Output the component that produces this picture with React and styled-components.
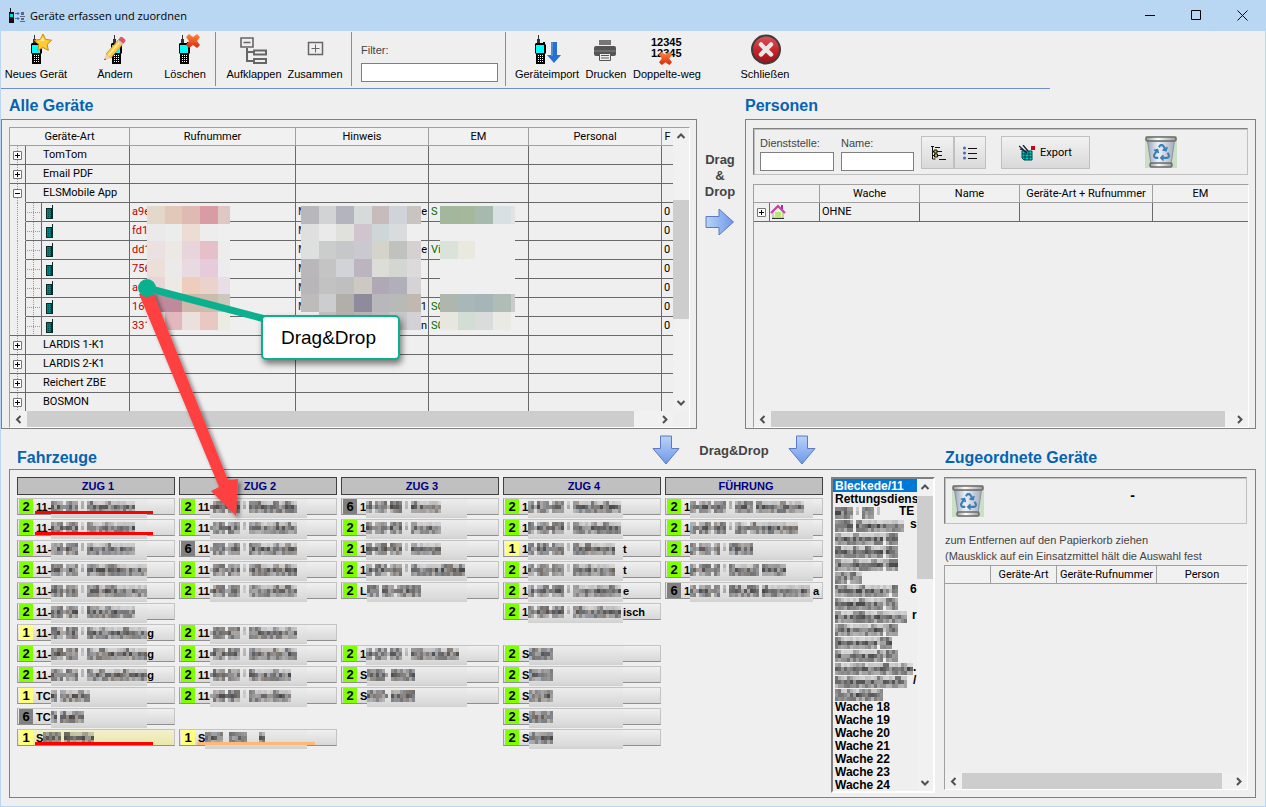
import React, { useState } from 'react'
import styled, { createGlobalStyle, css } from 'styled-components'
import { FaRecycle } from 'react-icons/fa'

const GlobalStyle = createGlobalStyle`
  * {
    box-sizing: border-box;
  }

  body {
    margin: 0;
    background: #efefef;
    color: #000;
    font-family: "Liberation Sans", Arial, sans-serif;
    font-size: 11px;
  }

  button, input, select {
    font: inherit;
    color: inherit;
    border-radius: 0;
    margin: 0;
    padding: 0;
  }
`

/* ---------- window ---------- */

const Window = styled.div`
  position: relative;
  display: flex;
  flex-direction: column;
  min-height: 100vh;
  min-width: 1100px;
  border: 1px solid #b9d7f3;
  border-top: 0;
  background: #efefef;
`

const TitleBar = styled.header`
  display: flex;
  align-items: center;
  height: 31px;
  padding-left: 8px;
  background: #b9d7f3;
`

const WindowTitle = styled.h1`
  flex: 1;
  margin: 0 0 0 5px;
  font: 400 11px/30px "Open Sans", sans-serif;
`

const WindowButton = styled.button`
  width: 46px;
  height: 31px;
  border: 0;
  background: none;

  svg {
    display: block;
    margin: 0 auto;
  }
`

/* ---------- toolbar ---------- */

const Toolbar = styled.nav`
  display: flex;
  width: 1049px;
  height: 58px;
  padding: 1px 0 2px;
  border-bottom: 1px solid #6d8fd0;
`

const ToolGroup = styled.div`
  display: flex;
  padding: 0 ${p => p.$right || 0}px 0 ${p => p.$left || 0}px;
  border-right: ${p => (p.$last ? '0' : '1px solid #6d8fd0')};
`

const ToolButton = styled.button`
  display: flex;
  flex-direction: column;
  align-items: center;
  width: ${p => p.$width}px;
  margin-left: ${p => p.$gap || 0}px;
  border: 0;
  background: none;
  white-space: nowrap;
  line-height: 14px;

  svg {
    display: block;
    margin: 1px 0 2px;
  }
`

const Field = styled.label`
  display: flex;
  flex-direction: column;
  width: ${p => p.$width}px;
  color: #444;
  line-height: 14px;
`

const Spacer = styled.span`
  height: 11px;
`

const TextInput = styled.input`
  width: 100%;
  height: 19px;
  margin-top: ${p => p.$gap || 0}px;
  padding: 0 3px;
  border: 1px solid #7f7f7f;
  background: #fff;
`

/* ---------- panels ---------- */

const TopArea = styled.main`
  display: grid;
  grid-template-columns: minmax(0, 696fr) 48px minmax(0, 511fr);
  padding-right: 9px;
`

const Column = styled.section`
  display: flex;
  flex-direction: column;
`

const SectionTitle = styled.h2`
  margin: 0;
  padding: 4px 0 0 ${p => p.$indent || 0}px;
  font-size: 16px;
  line-height: 26px;
  color: #0563b3;
`

const Panel = styled.div`
  display: flex;
  flex-direction: column;
  flex: 1;
  padding: ${p => p.$pad || '7px 6px 0 7px'};
  border: 1px solid #808080;
`

const DragHint = styled.div`
  display: flex;
  flex-direction: column;
  align-items: center;
  padding: 63px 2px 0 0;
  color: #444;
  font-weight: 700;
  font-size: 13px;
  line-height: 16px;

  svg {
    margin-top: 8px;
  }
`

const GroupBox = styled.div`
  display: flex;
  align-items: flex-start;
  height: 47px;
  margin-right: 1px;
  padding: ${p => p.$pad};
  border: 1px solid #c0c0c0;
  border-top-color: #808080;
  border-left-color: #808080;
  box-shadow: inset 1px 1px 0 #c0c0c0;
`

/* ---------- grids ---------- */

const Frame = styled.div`
  position: relative;
  display: grid;
  grid-template-columns: minmax(0, 1fr) ${p => (p.$vertical ? '16px' : '')};
  grid-template-rows: minmax(0, 1fr) 16px;
  flex: 1;
  margin-top: ${p => p.$top || 0}px;
  border: 1px solid #fff;
  border-top-color: #a0a0a0;
  border-left-color: #a0a0a0;
`

const Viewport = styled.div`
  overflow: hidden;
`

const Table = styled.table`
  width: 100%;
  table-layout: fixed;
  border-spacing: 0;
  font: 11px/16px Roboto, sans-serif;

  th {
    height: 18px;
    padding: 0;
    border-right: 1px solid #a0a0a0;
    border-bottom: 1px solid #a0a0a0;
    font-weight: 400;
    white-space: nowrap;
    overflow: hidden;
    background: #f1f1f1;
  }

  td {
    height: 19px;
    padding: 0 0 0 2px;
    border-right: 1px solid #696969;
    border-bottom: 1px solid #696969;
    white-space: nowrap;
    overflow: hidden;
  }

  th:last-child,
  td:last-child {
    border-right: 0;
  }
`

const DeviceTable = styled(Table)`
  tr:last-child td {
    height: 18px;
    border-bottom: 0;
  }
`

const TreeCell = styled.td`
  && {
    padding: 0;
    border-bottom-color: ${p => (p.$open ? 'transparent' : '#696969')};
    background: linear-gradient(#999 1px, transparent 1px) 7px 0 / 1px 2px repeat-y;
  }
`

const GroupCell = styled.td`
  && {
    padding-left: 17px;
  }
`

const BareCell = styled.td`
  && {
    padding: 0;
  }
`

const Branch = styled.div`
  display: flex;
  align-items: center;
  height: 18px;

  i {
    align-self: stretch;
    width: 16px;
    margin-right: 4px;
    border-right: 1px solid #696969;
    background:
      linear-gradient(#999 1px, transparent 1px) 7px 0 / 1px 2px repeat-y,
      linear-gradient(90deg, #999 1px, transparent 1px) 7px 9px / 2px 1px repeat-x;
  }
`

const Expander = styled.button`
  display: block;
  width: 9px;
  height: 9px;
  margin: 0 auto 0 3px;
  border: 0;
  background: #fff;

  svg {
    display: block;
  }
`

const Split = styled.div`
  display: flex;
  justify-content: space-between;
  color: #0a246a;

  span:last-child {
    padding-right: 1px;
    color: #000;
  }
`

const Ink = styled.span`
  color: ${p => p.$color};
`

const Censor = styled.svg`
  position: absolute;
  top: 78px;
  left: ${p => p.$left}px;
`

/* ---------- scrollbars ---------- */

const Bar = styled.div`
  display: flex;
  flex-direction: ${p => (p.$vertical ? 'column' : 'row')};
  background: #f1f1f1;
`

const ScrollArrow = styled.button`
  flex: 0 0 17px;
  display: grid;
  place-items: center;
  border: 0;
  background: none;
`

const Gap = styled.span`
  flex: ${p => p.$grow} 0 0;
`

const Thumb = styled.span`
  flex: ${p => p.$grow} 0 0;
  background: #cdcdcd;
`

/* ---------- vehicles ---------- */

const MiddleBar = styled.div`
  display: grid;
  grid-template-columns: minmax(0, 1fr) 164px 129px 311px;
  height: 40px;
  padding: 0 9px 0 16px;

  h2 {
    padding-top: 16px;
  }
`

const MiddleHint = styled.div`
  grid-column: 2;
  display: flex;
  justify-content: space-between;
  align-items: center;
  color: #444;
  font-weight: 700;
  font-size: 13px;
`

const HeadSlot = styled.div`
  grid-column: 4;
`

const LowerPanel = styled(Panel)`
  flex-direction: row;
  margin: 0 9px 8px 8px;
  padding: 7px 7px 4px;
`

const VehicleGrid = styled.div`
  flex: 1;
  display: grid;
  grid-template-columns: repeat(5, minmax(0, 1fr));
  align-items: start;
  gap: 4px;
`

const VehicleList = styled.div`
  display: grid;
  grid-auto-rows: 17px;
  gap: 4px;
`

const ColumnHead = styled.h3`
  margin: 0 0 3px;
  padding-left: 4px;
  border: 1px solid #404040;
  background: #c0c0c0;
  color: #000080;
  font-size: 11px;
  line-height: 16px;
  text-align: center;
`

const VehicleButton = styled.button`
  position: relative;
  display: flex;
  width: 100%;
  border: 1px solid #c3c3c3;
  border-left-color: #a0a0a0;
  border-bottom-color: #8f8f8f;
  background: ${p => (p.$marked ? 'linear-gradient(#f3f0cd, #ebe7a8)' : 'linear-gradient(#f0f0f0, #d8d8d8)')};
  font-weight: 700;
  line-height: 16px;
  text-align: left;

  ${p => p.$line && css`
    &::after {
      content: '';
      position: absolute;
      left: 17px;
      bottom: 0;
      width: 118px;
      height: 3px;
      background: ${p.$line};
    }
  `}
`

const Status = styled.span`
  flex: 0 0 14px;
  height: 15px;
  margin: 0 3px 0 1px;
  background: ${p => ({ 1: '#ffff80', 2: '#80ff00', 6: '#808080' })[p.$code]};
  font-size: 13px;
  line-height: 15px;
  text-align: center;
`

const CallSign = styled.span`
  flex: 0 0 ${p => p.$width}px;
  display: flex;
`

const MosaicBox = styled.span`
  flex: 1;
  min-width: 0;
  height: 19px;
  padding-top: 2px;
  overflow: hidden;
  background: ${p => (p.$clear ? 'none' : 'linear-gradient(#ececec, #dadada 80%, #d0d0d0)')};

  svg {
    display: block;
  }
`

/* ---------- stations ---------- */

const StationBox = styled.div`
  position: relative;
  display: grid;
  grid-template-columns: minmax(0, 1fr) 16px;
  width: 104px;
  margin: 0 9px 0 8px;
  border: 2px solid #fff;
  border-top-color: #808080;
  border-left-color: #808080;
`

const StationSelect = styled.select`
  width: 100%;
  height: 312px;
  border: 0;
  outline: 0;
  background: #efefef;
  overflow: hidden;

  option {
    height: 13px;
    min-height: 0;
    padding: 0 0 0 2px;
    font: 700 12px/13px "Liberation Sans", Arial, sans-serif;
    white-space: nowrap;
  }

  option:checked {
    background: #0078d7 linear-gradient(#0078d7, #0078d7);
    color: #fff;
  }
`

const StationCover = styled.div`
  position: absolute;
  top: 26px;
  left: 2px;
  width: 82px;
  pointer-events: none;
  font-weight: 700;
  font-size: 12px;
  line-height: 13px;
`

const StationRow = styled.div`
  display: flex;
  height: 13px;
`

/* ---------- assigned devices ---------- */

const Assigned = styled.section`
  display: flex;
  flex-direction: column;
  width: 304px;
  padding-bottom: 3px;
`

const AssignedName = styled.strong`
  flex: 1;
  padding-left: 42px;
  font-size: 14px;
  line-height: 20px;
  text-align: center;
`

const Note = styled.p`
  margin: 8px 0 1px 1px;
  color: #444;
  line-height: 16px;
`

/* ---------- persons ---------- */

const ViewSwitch = styled.div`
  display: flex;
  margin-left: 7px;
`

const FlatButton = styled.button`
  display: flex;
  align-items: center;
  justify-content: center;
  gap: 5px;
  width: ${p => p.$width}px;
  height: 33px;
  margin-left: ${p => p.$gap || 0}px;
  border: 1px solid #c0c0c0;
  background: linear-gradient(#f2f2f2, #d9d9d9);
  font: 11px/16px Roboto, sans-serif;
`

const BinSlot = styled.div`
  margin-left: 55px;
`

/* ---------- annotation ---------- */

const Annotation = styled.svg`
  position: absolute;
  top: 0;
  left: 0;
  pointer-events: none;
`

const Callout = styled.div`
  position: absolute;
  top: 315px;
  left: 260px;
  width: 139px;
  padding-right: 4px;
  border: 2px solid #0bb08e;
  border-radius: 5px;
  background: #fff;
  box-shadow: 2px 4px 6px rgba(0, 0, 0, 0.5);
  font-size: 19px;
  line-height: 41px;
  text-align: center;
`

/* ---------- icons ---------- */

const Radio = ({ x = 0, y = 0 }) => (
  <g transform={`translate(${x} ${y})`}>
    <path d="M3 0h1v4h1v5H2V4h1z" fill="#333" />
    <path d="M0 9l1-1h7V7h2v2l1 1v8l-1 1v10H1V19l-1-1z" fill="#000" />
    <rect x="1" y="10" width="8" height="8" fill="#0ff" />
    <path d="M3 20h1v1H3zm2 0h1v1H5zm2 0h1v1H7zM3 22h1v1H3zm2 0h1v1H5zm2 0h1v1H7zM3 24h1v1H3zm2 0h1v1H5zm2 0h1v1H7zM3 26h1v1H3zm2 0h1v1H5zm2 0h1v1H7z" fill="#fff" />
  </g>
)

const Cross = ({ x, y, size = 14 }) => (
  <svg x={x} y={y} width={size} height={size} viewBox="0 0 14 14">
    <defs>
      <linearGradient id="cross" x1="0" y1="0" x2="0" y2="1">
        <stop offset="0" stopColor="#ff8a3c" />
        <stop offset="1" stopColor="#d8290f" />
      </linearGradient>
    </defs>
    <path d="M3 0l4 3 4-3 3 3-3 4 3 4-3 3-4-3-4 3-3-3 3-4-3-4z" fill="url(#cross)" />
  </svg>
)

const NewIcon = () => (
  <svg width="42" height="32">
    <Radio x={16} y={2} />
    <path d="M28 1l2.600 5.400 6 .8-4.400 4.200 1.100 6-5.300-2.900-5.300 2.900 1.100-6-4.400-4.200 6-.8z" fill="#ffcb2e" stroke="#c98a12" />
    <path d="M28 4l1.500 4h-5z" fill="#ffe98a" />
  </svg>
)

const EditIcon = () => (
  <svg width="32" height="32">
    <Radio x={12} y={2} />
    <path d="M19 7l5 4L12 25l-5-4z" fill="#fbc93d" stroke="#b07a1a" strokeWidth=".6" />
    <path d="M21 8.500L9.500 22.500" stroke="#ffeaa0" strokeWidth="1.500" />
    <path d="M19 7l2.200-2.700q1-1 2.300 0l2.400 2q1.200 1 .3 2.200L24 11z" fill="#e0546a" />
    <path d="M18.500 8l5 4 1-1.300-5-4z" fill="#c8c8c8" />
    <path d="M7 21l5 4-7 2z" fill="#f0cfa0" />
    <path d="M6 25.500l1.300 1L5 27z" fill="#333" />
  </svg>
)

const DeleteIcon = () => (
  <svg width="38" height="32">
    <Radio x={13} y={2} />
    <Cross x={20} y={1} />
  </svg>
)

const ExpandIcon = () => (
  <svg width="32" height="32" fill="none" stroke="#666" strokeWidth="2">
    <path d="M3 5h12v9H3zM5.500 9.500h7" strokeWidth="1.600" />
    <path d="M9 15v13h6M9 19h6M16 17.500h12v4H16zM16 26h12v4H16z" />
  </svg>
)

const CollapseIcon = () => (
  <svg width="32" height="32" fill="none" stroke="#666">
    <path d="M9.500 9.500h14v12h-14z" strokeWidth="1.500" />
    <path d="M16.500 11.500v8M12.500 15.500h8" />
  </svg>
)

const ImportIcon = () => (
  <svg width="28" height="32">
    <Radio x={2} y={2} />
    <path d="M18 9h6v13h4l-7 8-7-8h4z" fill="#2a6fcd" />
    <path d="M18 9h2v14h-2z" fill="#4d8de0" />
  </svg>
)

const PrintIcon = () => (
  <svg width="24" height="32">
    <path d="M5 7h12v5H5z" fill="#777" />
    <path d="M2 13h18q2 0 2 2v6q0 2-2 2H2q-2 0-2-2v-6q0-2 2-2z" fill="#555" />
    <path d="M0 17h22v2H0z" fill="#6d6d6d" />
    <path d="M5.500 20.500h11v7h-11z" fill="#eee" stroke="#555" />
    <path d="M7 22h8v1H7zM7 24.500h8v1H7z" fill="#555" />
  </svg>
)

const DuplicateIcon = () => (
  <svg width="34" height="32">
    <text x="1" y="13" fontSize="11" fontWeight="700">12345</text>
    <text x="1" y="24" fontSize="11" fontWeight="700">12345</text>
    <Cross x={9} y={19} size={13} />
  </svg>
)

const CloseIcon = () => (
  <svg width="32" height="32">
    <defs>
      <linearGradient id="close" x1="0" y1="0" x2="0" y2="1">
        <stop offset="0" stopColor="#d9555c" />
        <stop offset=".5" stopColor="#c9262c" />
        <stop offset="1" stopColor="#9c1117" />
      </linearGradient>
    </defs>
    <circle cx="17" cy="16.500" r="14" fill="url(#close)" stroke="#3d3d3d" strokeWidth="2" />
    <path d="M12 11.500l10 10M22 11.500l-10 10" stroke="#e8e8e8" strokeWidth="4.500" strokeLinecap="round" />
  </svg>
)

const BlueArrow = ({ down }) => (
  <svg width={down ? 28 : 30} height={down ? 30 : 28} viewBox={down ? '0 0 28 30' : '0 0 30 28'}>
    <defs>
      <linearGradient id={down ? 'arrowDown' : 'arrowRight'} x1="0" y1="0" x2={down ? 0 : 1} y2={down ? 1 : 0}>
        <stop offset="0" stopColor="#b8d3f8" />
        <stop offset="1" stopColor="#6f97ea" />
      </linearGradient>
    </defs>
    <path
      d={down ? 'M8.500 1h11v12.500h7.500L14 29 1 13.500h7.500z' : 'M1 8.500h13V1l14.500 13L14 27v-7.500H1z'}
      fill={`url(#${down ? 'arrowDown' : 'arrowRight'})`}
      stroke="#5b7ac0"
    />
  </svg>
)

const Bin = () => (
  <svg width="32" height="32">
    <defs>
      <linearGradient id="bin">
        <stop offset="0" stopColor="#9aa5bd" />
        <stop offset=".4" stopColor="#eef1f8" />
        <stop offset="1" stopColor="#a3abbd" />
      </linearGradient>
      <linearGradient id="rim">
        <stop offset="0" stopColor="#999" />
        <stop offset=".4" stopColor="#fff" />
        <stop offset="1" stopColor="#999" />
      </linearGradient>
    </defs>
    <rect width="32" height="32" fill="#c9e0c5" />
    <path d="M2.500 5h27L26 28H6z" fill="url(#bin)" stroke="#8a92a5" />
    <rect x="1" y="1" width="30" height="4" rx="1.500" fill="url(#rim)" stroke="#6b6b6b" strokeWidth="1.500" />
    <rect x="5" y="27" width="22" height="4" rx="1.500" fill="url(#rim)" stroke="#6b6b6b" strokeWidth="1.500" />
    <FaRecycle x="8" y="8" size={17} color="#3a80b4" />
  </svg>
)

const Handset = () => (
  <svg width="8" height="15">
    <path d="M6 0h1v14H0V3h6z" fill="#0a2a2a" />
    <path d="M1 4h4v9H1z" fill="#008080" />
    <path d="M2 5h1v1H2zm2 0h1v1H4zM2 7h1v1H2zm2 0h1v1H4zM2 9h1v1H2zm2 0h1v1H4zM2 11h1v1H2zm2 0h1v1H4z" fill="#055" />
  </svg>
)

const House = () => (
  <svg width="16" height="16">
    <path d="M3 8l5-5 5 5v6H3z" fill="#f3f7c9" stroke="#888" strokeWidth=".7" />
    <path d="M5 8h6v6H5z" fill="#b6e878" />
    <path d="M11 1h2v4h-2z" fill="#b22a9a" />
    <path d="M1 9l7-7 7 7" fill="none" stroke="#cc3db4" strokeWidth="2.200" />
    <path d="M2 14.500h12" stroke="#333" />
  </svg>
)

const TreeIcon = () => (
  <svg width="16" height="16" fill="none" stroke="#111">
    <path d="M1 1.500h3M5 2.500h5M2.500 2v12h3M3 6.500h2M7 6.500h5M3 10.500h2M8 10.500h4M9 14.500h7" />
    <path d="M4 5h3v3H4z" fill="#d8c030" />
    <path d="M4.500 9h3v3h-3z" fill="#d8c030" />
  </svg>
)

const ListIcon = () => (
  <svg width="14" height="14">
    <path d="M5 2.500h9M5 7.500h9M5 12.500h9" stroke="#111" />
    <circle cx="1.500" cy="2" r="1.500" fill="#4a66b0" />
    <circle cx="1.500" cy="7" r="1.500" fill="#4a66b0" />
    <circle cx="1.500" cy="12" r="1.500" fill="#4a66b0" />
  </svg>
)

const ExportIcon = () => (
  <svg width="16" height="16">
    <path d="M3 6h10v9H5l-2-2z" fill="#0cc" stroke="#044" />
    <path d="M3 9h10M3 12h10M6 6v9M10 6v9" stroke="#044" />
    <path d="M0 1l8 7M1 4l5 2M4 0l5 6" stroke="#123" strokeWidth="1.300" />
    <rect x="12" y="1" width="4" height="4" fill="#d0021b" />
  </svg>
)

const TitleIcon = () => (
  <svg width="16" height="16">
    <path d="M1 0h1v4h3v11H0V4h1z" fill="#111" />
    <path d="M1 6h3v3H1z" fill="#0dd" />
    <path d="M6 5.500h4M6 10.500h4M8.500 4l1.500 1.500L8.500 7M8.500 9l1.500 1.500L8.500 12" stroke="#2e6fd0" fill="none" />
    <path d="M12 4h3v3h-3zM11 8h5v1h-5zM12 10h3v2h-3zM11 13h5v1h-5z" fill="#667" />
  </svg>
)

/* ---------- small parts ---------- */

const TreeToggle = ({ label, open, onClick }) => (
  <Expander aria-label={label} aria-expanded={open} onClick={onClick}>
    <svg width="9" height="9" fill="none">
      <path d="M.5.500h8v8h-8z" stroke="#777" />
      <path d={open ? 'M2 4.500h5' : 'M2 4.500h5M4.500 2v5'} stroke="#000" />
    </svg>
  </Expander>
)

const chevrons = {
  up: 'M1.500 6L5 2.500 8.500 6',
  down: 'M1.500 3L5 6.500 8.500 3',
  left: 'M6.500 1L3 4.500 6.500 8',
  right: 'M3 1l3.500 3.500L3 8'
}

const Chevron = ({ dir }) => (
  <ScrollArrow aria-label={dir} tabIndex={-1}>
    <svg width="10" height="9" fill="none" stroke="#505050" strokeWidth="2">
      <path d={chevrons[dir]} />
    </svg>
  </ScrollArrow>
)

// parts: free space before the thumb, thumb, free space after it
const ScrollBar = ({ vertical, parts }) => (
  <Bar $vertical={vertical}>
    <Chevron dir={vertical ? 'up' : 'left'} />
    <Gap $grow={parts[0]} />
    <Thumb $grow={parts[1]} />
    <Gap $grow={parts[2]} />
    <Chevron dir={vertical ? 'down' : 'right'} />
  </Bar>
)

// Pixelated stand-in for hidden words: "#" tall glyph, "x" low glyph, "-" dash
const Mosaic = ({ pattern, seed = 1, clear }) => {
  const cells = []
  let x = 0
  let n = seed * 7919
  const next = () => {
    n = (n * 1103515245 + 12345) % 2147483648
    return n / 2147483648
  }
  const cell = (row, alpha) => {
    const v = Math.round(50 + next() * 105)
    const tint = Math.round(next() * 16)
    const fill = clear ? `rgb(${v},${v},${v})` : `rgb(${v + tint},${v + 6},${v + 14 - tint})`
    cells.push(<rect key={cells.length} x={x} y={row * 4} width="3" height="4" fill={fill} opacity={alpha} />)
  }
  for (const ch of pattern) {
    if (ch === '#' || ch === 'x') {
      for (let i = 0; i < 2; i++) {
        cell(0, ch === '#' ? 0.7 : 0.25)
        cell(1, 0.9)
        cell(2, 0.65)
        x += 3
      }
    } else {
      if (ch === '-') cell(1, 0.7)
      if (ch === '/') {
        cell(0, 0.35)
        cell(1, 0.35)
      }
      x += 3
    }
  }
  return (
    <MosaicBox $clear={clear}>
      <svg width={x} height="12">{cells}</svg>
    </MosaicBox>
  )
}

const ColorBlocks = ({ left, xs, rows }) => {
  const ys = [0, 18, 35, 53, 71, 88, 106, 124]
  return (
    <Censor $left={left} width={xs[xs.length - 1]} height="124">
      <rect width="100%" height="124" fill="#efefef" />
      {rows.map((row, r) => row.split(' ').map((c, i) => (
        <rect key={`${r}-${i}`} x={xs[i]} y={ys[r]} width={xs[i + 1] - xs[i]} height={ys[r + 1] - ys[r]} fill={`#${c}`} />
      )))}
    </Censor>
  )
}

/* ---------- data ---------- */

const numberBlocks = [
  'e3d8ca e2c8b8 dfbab4 d99ca4 dfc8c4',
  'ebeaea ebecec ecdcd4 ededed efefef',
  'ebe0e2 ebe9e2 e8d5dc e6c0c9 eceeec',
  'ecdfd8 ebeaea e8dae0 e6cbdb ececee',
  'e8d5da ebeae4 eecdbc ead3ca e9dee8',
  'bf8a9c bf8a9c d0b9aa cbbcae cdc8be',
  'efefef e3b8bd ebe0de e9c8c4 ecebe2'
]

const hintBlocks = [
  'b8b7bc d2d3d4 b3b4be d5dbdb c7bbbb d0d4da c9c4c0',
  'dfdfdf eaeaea e1e1db d0c5ce ced7d8 d9dcdc efefef',
  'dde0df cbcccc c6c7c8 cac9d0 d5d3ca c0c2c0 d6d0d2',
  'b9b7ba c4c4c4 d0d4d8 bcb5c0 dcddd8 d4d6d2 dcdadb',
  'b8b6b8 c1c2c1 bfbfbf cdc8c2 b0a8b4 b0afba d5d3d3',
  'bdbcbb cccdce b2afa8 908b9c b8b7bc b8bab8 c1b8b0',
  'efefef c6c0c0 b9b2ae b9b7ba c0c0c0 c8c8c9 d3d1d6'
]

const emBlocks = [
  'a2b79b a6b89c a6baae d8e0e3 e3e3e3',
  'efefef efefef efefef efefef efefef',
  'd9e3d9 e9e9e0 efefef efefef efefef',
  'efefef efefef efefef efefef efefef',
  'efefef efefef efefef efefef efefef',
  'aeb6ae a8b7b8 a6b6b8 b0bdb6 cacaca',
  'e7e7df d2ddd3 d9dcda e9eae4 efefef'
]

// items: [number, hint start, hint end, vehicle]
const deviceGroups = [
  { name: 'TomTom' },
  { name: 'Email PDF' },
  {
    name: 'ELSMobile App',
    items: [
      ['a9e', 'M', 'e', 'S'],
      ['fd1', 'M', '', ''],
      ['dd1', 'M', 'e', 'Vir'],
      ['756', 'M', '', ''],
      ['a', 'M', '', ''],
      ['16', 'M', '1', 'SC'],
      ['331', '', 'n', 'SC']
    ]
  },
  { name: 'LARDIS 1-K1' },
  { name: 'LARDIS 2-K1' },
  { name: 'Reichert ZBE' },
  { name: 'BOSMON' }
]

// rows: [status, visible start, hidden pattern, visible end, line colour]
const vehicles = [
  {
    name: 'ZUG 1', width: 111,
    rows: [
      [2, '11-', '##-## / #xx#xxxx', '', '#f00'],
      [2, '11-', '##-## / #xx#xxxx', '', '#f00'],
      [2, '11-', '##-## / #xx#xxxx', ''],
      [2, '11-', '##-## / ##x##xxxxx', ''],
      [2, '11-', '##-## / ##x##xxxxx', ''],
      [2, '11-', '##-## / ##x#xxxx', ''],
      [1, '11-', '##-## / #x#xxx#xxx', 'g'],
      [2, '11-', '##-## / #x#xxx#xxx', 'g'],
      [2, '11-', '##-## / #x#xxx#xxx', 'g'],
      [1, 'TC', '# #xx#x', ''],
      [6, 'TC', '# #x##', ''],
      [1, 'S', '### #xx#x', '', '#f00']
    ]
  },
  {
    name: 'ZUG 2', width: 109,
    rows: [
      [2, '11', '-##-## / ##xx#x#x', ''],
      [2, '11', '-##-## / ##xx#x#x', ''],
      [6, '11', '-##-## / ##xx#x#x', ''],
      [2, '11', '-##-## / ##xx#x#x', ''],
      [2, '11', '-##-## / ##xx#x#x', ''],
      null,
      [2, '11', '-##-## / ##xx#x#x', ''],
      [2, '11', '-##-## / ##xx#x#x', ''],
      [2, '11', '-##-## / #xxx#xx', ''],
      [2, '11', '-##-## / #xxx#xx', ''],
      null,
      [1, 'S', '###  ###    #', '', '#ffb878']
    ]
  },
  {
    name: 'ZUG 3', width: 107,
    rows: [
      [6, '1', '#-##-## / #xxxx', ''],
      [2, '1', '#-##-## / #xxxx', ''],
      [2, '1', '#-##-## / #xxxx', ''],
      [2, '1', '#-##-## / #xxxx##x#', ''],
      [2, 'L', '## ##-####', ''],
      null,
      null,
      [2, '1', '#-##-## / ##xx#x#x', ''],
      [2, 'S', '###- ####', ''],
      [2, 'S', '###- ####', '']
    ]
  },
  {
    name: 'ZUG 4', width: 101,
    rows: [
      [2, '1', '#-##-## / #xx#x#xx', ''],
      [2, '1', '#-##-## / #xx#x#xx', ''],
      [1, '1', '#-##-## / #x#xxxx', 't'],
      [2, '1', '#-##-## / #x#xxxx', 't'],
      [2, '1', '#-##-## / #xxx#x#x', 'e'],
      [2, '1', '#-##-## / ##xx#xxx', 'isch'],
      null,
      [2, 'S', '####', ''],
      [2, 'S', '####', ''],
      [2, 'S', '####', ''],
      [2, 'S', '####', ''],
      [2, 'S', '####', '']
    ]
  },
  {
    name: 'FÜHRUNG', width: 129,
    rows: [
      [2, '1', '#-##-## / ### #xxx#xxx', ''],
      [2, '1', '#-##-## / #x-#xxxxxxx', ''],
      [2, '1', '#-##-# / ####', ''],
      [2, '1', '#-##-# / #xxx# ####', ''],
      [6, '1', '#-##-# / ##x## #xxxxxxx', 'a']
    ]
  }
]

// [hidden pattern, visible end, width of the hidden part]
const hiddenStations = [
  ['### / ## / ', 'TE', 64], ['### #xxxxxxx', 's', 75], ['#xx#xxxx/##', '', 82], ['#xx#x#xx/##', '', 82],
  ['#xx#xx#x/##', '', 82], ['##/#x', '', 82], ['##xx#xxxx/#', '6', 75], ['#xxx#xxx/##', '', 82],
  ['#xx##xx#xxxx', 'r', 77], ['##xxxx#x/##', '', 82], ['#xxxxxx/##', '', 82], ['#xx#xxx#/##', '', 82],
  ['#xx##xxx#xx#x', '.', 78], ['#x#xxxx#xx#x', '/', 78], ['#x#x##x#', '', 82]
]

const wachen = [18, 19, 20, 21, 22, 23, 24]

/* ---------- sections ---------- */

const DeviceRows = ({ group }) => {
  const [open, setOpen] = useState(Boolean(group.items))
  return (
    <>
      <tr>
        <TreeCell $open={open}>
          <TreeToggle label={group.name} open={open} onClick={() => setOpen(!open)} />
        </TreeCell>
        <GroupCell>{group.name}</GroupCell>
        <td /><td /><td /><td /><td />
      </tr>
      {open && group.items && group.items.map(([number, start, end, em], i) => (
        <tr key={number}>
          <TreeCell $open={i < group.items.length - 1} />
          <BareCell>
            <Branch><i /><Handset /></Branch>
          </BareCell>
          <td><Ink $color="#c00000">{number}</Ink></td>
          <td><Split><span>{start}</span><span>{end}</span></Split></td>
          <td><Ink $color="#007000">{em}</Ink></td>
          <td />
          <td>0</td>
        </tr>
      ))}
    </>
  )
}

const Devices = () => (
  <Frame $vertical>
    <Viewport>
      <DeviceTable>
        <colgroup>
          <col width="16" /><col width="104" /><col width="166" /><col width="133" />
          <col width="100" /><col width="133" /><col />
        </colgroup>
        <thead>
          <tr>
            <th colSpan="2">Geräte-Art</th>
            <th>Rufnummer</th>
            <th>Hinweis</th>
            <th>EM</th>
            <th>Personal</th>
            <th>F</th>
          </tr>
        </thead>
        <tbody>
          {deviceGroups.map(g => <DeviceRows key={g.name} group={g} />)}
        </tbody>
      </DeviceTable>
    </Viewport>
    <ScrollBar vertical parts={[55, 119, 75]} />
    <ScrollBar parts={[0, 607, 22]} />
    <ColorBlocks left={137} xs={[0, 18, 35, 53, 71, 83]} rows={numberBlocks} />
    <ColorBlocks left={291} xs={[0, 18, 35, 53, 71, 88, 106, 120]} rows={hintBlocks} />
    <ColorBlocks left={430} xs={[0, 18, 35, 53, 71, 75]} rows={emBlocks} />
  </Frame>
)

const Persons = () => {
  const [open, setOpen] = useState(false)
  return (
    <Panel $pad="8px 6px 0 7px">
      <GroupBox $pad="7px 6px 0 6px">
        <Field $width={74}>
          Dienststelle:
          <TextInput $gap={2} />
        </Field>
        <ViewSwitch>
          <Field $width={73}>
            Name:
            <TextInput $gap={2} />
          </Field>
        </ViewSwitch>
        <ViewSwitch>
          <FlatButton $width={33} aria-label="Baum"><TreeIcon /></FlatButton>
          <FlatButton $width={32} aria-label="Liste"><ListIcon /></FlatButton>
        </ViewSwitch>
        <FlatButton $width={89} $gap={15}><ExportIcon />Export</FlatButton>
        <BinSlot><Bin /></BinSlot>
      </GroupBox>
      <Frame $top={9}>
        <Viewport>
          <Table>
            <colgroup>
              <col width="16" /><col width="50" /><col width="100" />
              <col width="100" /><col width="133" /><col />
            </colgroup>
            <thead>
              <tr>
                <th colSpan="2" />
                <th>Wache</th>
                <th>Name</th>
                <th>Geräte-Art + Rufnummer</th>
                <th>EM</th>
              </tr>
            </thead>
            <tbody>
              <tr>
                <BareCell>
                  <TreeToggle label="OHNE" open={open} onClick={() => setOpen(!open)} />
                </BareCell>
                <BareCell><Branch><House /></Branch></BareCell>
                <td>OHNE</td>
                <td /><td /><td />
              </tr>
            </tbody>
          </Table>
        </Viewport>
        <ScrollBar parts={[0, 455, 6]} />
      </Frame>
    </Panel>
  )
}

const Vehicles = () => (
  <VehicleGrid>
    {vehicles.map((col, c) => (
      <div key={col.name}>
        <ColumnHead>{col.name}</ColumnHead>
        <VehicleList>
          {col.rows.map((row, r) => row ? (
            <VehicleButton key={r} $line={row[4]} $marked={c === 0 && r === 11}>
              <Status $code={row[0]}>{row[0]}</Status>
              <CallSign $width={col.width}>
                {row[1]}
                <Mosaic pattern={row[2]} seed={c * 20 + r + 1} clear={c === 0 && r === 11} />
              </CallSign>
              {row[3]}
            </VehicleButton>
          ) : <span key={r} />)}
        </VehicleList>
      </div>
    ))}
  </VehicleGrid>
)

const Stations = () => (
  <StationBox>
    <StationSelect size={24} defaultValue="Bleckede/11" aria-label="Wachen">
      <option>Bleckede/11</option>
      <option value="rd">Rettungsdiens</option>
      {hiddenStations.map((s, i) => <option key={i} value={i}>{'\u00a0'}</option>)}
      {wachen.map(n => <option key={n}>{`Wache ${n}`}</option>)}
    </StationSelect>
    <ScrollBar vertical parts={[0, 83, 195]} />
    <StationCover>
      {hiddenStations.map(([pattern, end, width], i) => (
        <StationRow key={i}>
          <CallSign $width={width}>
            <Mosaic pattern={pattern} seed={i + 200} clear />
          </CallSign>
          {end}
        </StationRow>
      ))}
    </StationCover>
  </StationBox>
)

const AssignedDevices = () => (
  <Assigned>
    <GroupBox $pad="7px">
      <Bin />
      <AssignedName>-</AssignedName>
    </GroupBox>
    <Note>
      zum Entfernen auf den Papierkorb ziehen<br />
      (Mausklick auf ein Einsatzmittel hält die Auswahl fest
    </Note>
    <Frame>
      <Viewport>
        <Table>
          <colgroup>
            <col width="46" /><col width="66" /><col width="100" /><col />
          </colgroup>
          <thead>
            <tr>
              <th />
              <th>Geräte-Art</th>
              <th>Geräte-Rufnummer</th>
              <th>Person</th>
            </tr>
          </thead>
        </Table>
      </Viewport>
      <ScrollBar parts={[0, 261, 8]} />
    </Frame>
  </Assigned>
)

const App = () => (
  <>
    <GlobalStyle />
    <Window>
      <TitleBar>
        <TitleIcon />
        <WindowTitle>Geräte erfassen und zuordnen</WindowTitle>
        <WindowButton aria-label="Minimieren">
          <svg width="11" height="11"><path d="M0 5.500h10" stroke="#000" /></svg>
        </WindowButton>
        <WindowButton aria-label="Maximieren">
          <svg width="11" height="11"><path d="M.5.500h9v9h-9z" fill="none" stroke="#000" /></svg>
        </WindowButton>
        <WindowButton aria-label="Fenster zu">
          <svg width="11" height="11"><path d="M.5.500l10 10M10.500.5l-10 10" stroke="#000" /></svg>
        </WindowButton>
      </TitleBar>

      <Toolbar>
        <ToolGroup $right={4}>
          <ToolButton $width={70}><NewIcon />Neues Gerät</ToolButton>
          <ToolButton $width={88}><EditIcon />Ändern</ToolButton>
          <ToolButton $width={52}><DeleteIcon />Löschen</ToolButton>
        </ToolGroup>
        <ToolGroup $left={4} $right={9}>
          <ToolButton $width={68}><ExpandIcon />Aufklappen</ToolButton>
          <ToolButton $width={54}><CollapseIcon />Zusammen</ToolButton>
        </ToolGroup>
        <ToolGroup $left={9} $right={7}>
          <Field $width={137}>
            <Spacer />
            Filter:
            <TextInput $gap={6} />
          </Field>
        </ToolGroup>
        <ToolGroup $left={6} $last>
          <ToolButton $width={70}><ImportIcon />Geräteimport</ToolButton>
          <ToolButton $width={48}><PrintIcon />Drucken</ToolButton>
          <ToolButton $width={74}><DuplicateIcon />Doppelte-weg</ToolButton>
          <ToolButton $width={70} $gap={26}><CloseIcon />Schließen</ToolButton>
        </ToolGroup>
      </Toolbar>

      <TopArea>
        <Column>
          <SectionTitle $indent={8}>Alle Geräte</SectionTitle>
          <Panel><Devices /></Panel>
        </Column>
        <DragHint>
          <span>Drag</span>
          <span>&amp;</span>
          <span>Drop</span>
          <BlueArrow />
        </DragHint>
        <Column>
          <SectionTitle>Personen</SectionTitle>
          <Persons />
        </Column>
      </TopArea>

      <MiddleBar>
        <SectionTitle>Fahrzeuge</SectionTitle>
        <MiddleHint>
          <BlueArrow down />
          Drag&amp;Drop
          <BlueArrow down />
        </MiddleHint>
        <HeadSlot>
          <SectionTitle>Zugeordnete Geräte</SectionTitle>
        </HeadSlot>
      </MiddleBar>

      <LowerPanel>
        <Vehicles />
        <Stations />
        <AssignedDevices />
      </LowerPanel>

      <Annotation width="420" height="530">
        <defs>
          <filter id="soft" x="-20%" y="-20%" width="140%" height="140%">
            <feDropShadow dx="3" dy="3" stdDeviation="2" floodOpacity="0.45" />
          </filter>
        </defs>
        <g filter="url(#soft)">
          <path d="M138 294l13-4 76 190 10-1-2 37-25-25 8-4z" fill="#ff4141" />
        </g>
        <path d="M146 288l118 31" stroke="#0bb08e" strokeWidth="7" />
        <circle cx="146" cy="288" r="9" fill="#0bb08e" />
      </Annotation>
      <Callout>Drag&amp;Drop</Callout>
    </Window>
  </>
)

export default App
